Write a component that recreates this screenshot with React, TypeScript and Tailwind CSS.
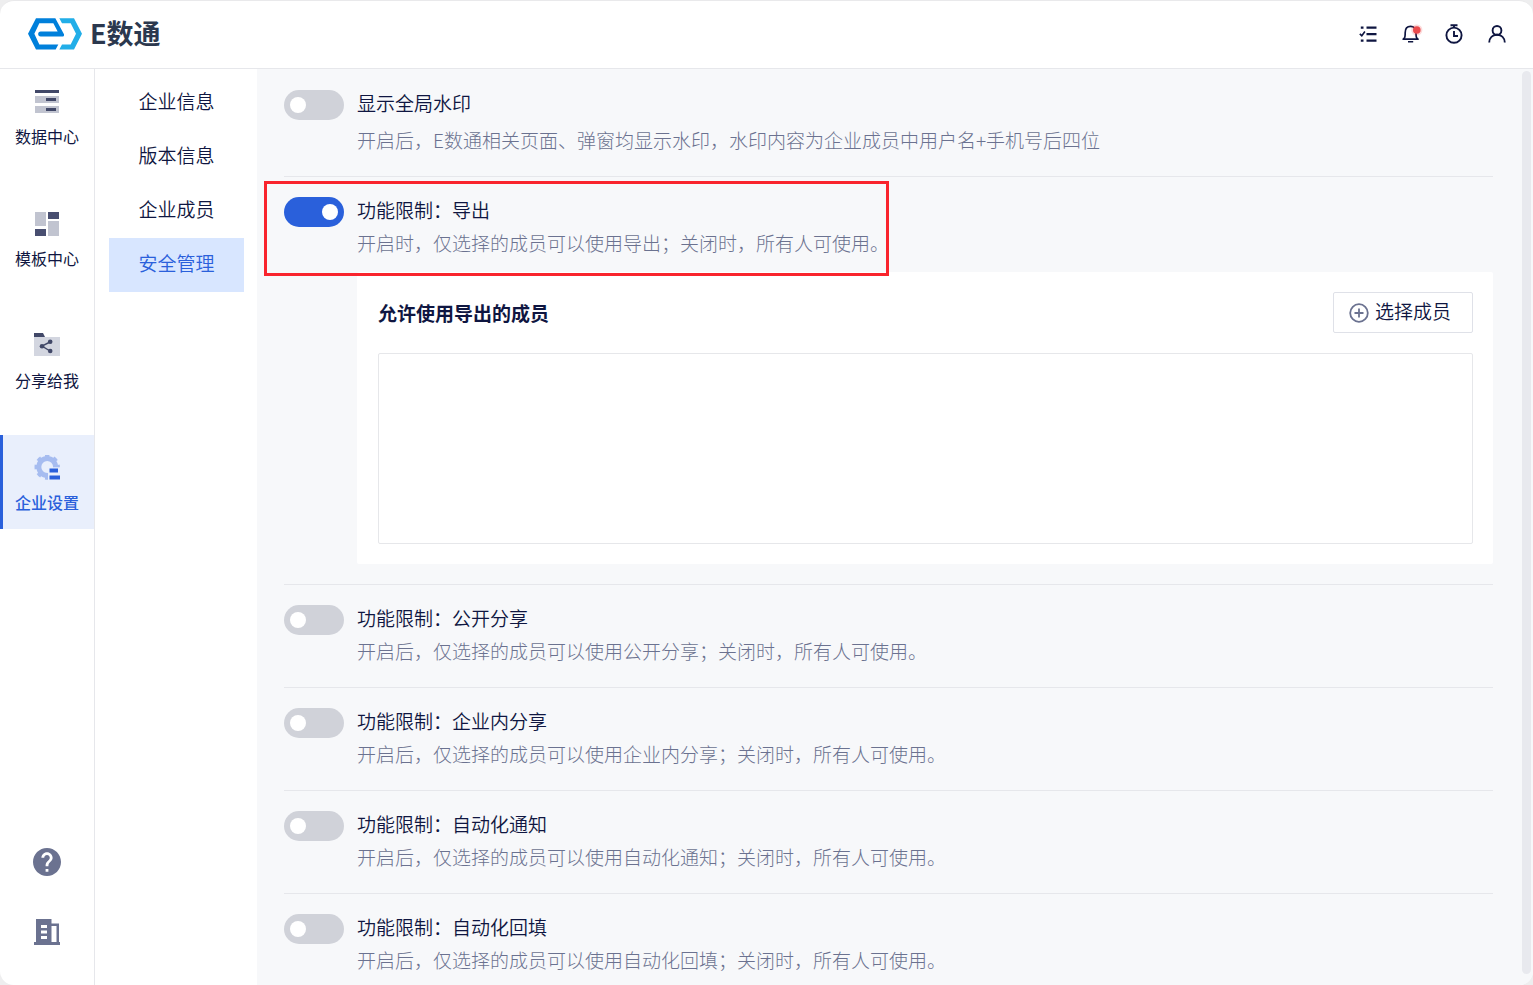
import { useState, type ReactNode } from "react";

type MenuItem = {
  key: string;
  label: string;
  icon: ReactNode;
};

type Setting = {
  id: string;
  title: string;
  description: string;
  memberTitle?: string;
  highlighted?: boolean;
};

function Logo() {
  return (
    <svg viewBox="84 56 162 95" className="h-8 w-[54px]" aria-hidden="true">
      <path
        fill="#0080DB"
        d="M108 56H166L192 104C193 108 191 111 187 111H122C112 111 112 96 122 96H173L160 71H118L103 103L118 135H175L167 150H108L84 103Z"
      />
      <path fill="#22AEE8" d="M178 56H222L246 103L222 150H178L186 135H212L228 103L212 71H186Z" />
    </svg>
  );
}

function DataIcon() {
  return (
    <svg viewBox="0 0 26 26" className="size-[26px]" aria-hidden="true">
      <path fill="#414868" d="M1 1H25V4H1Z" />
      <path fill="#C1C4D0" d="M1 7H25V14H1ZM1 17H25V24H1Z" />
      <path fill="#414868" d="M12 9H22V12H12ZM12 19H22V22H12Z" />
    </svg>
  );
}

function TemplateIcon() {
  return (
    <svg viewBox="0 0 26 26" className="size-[26px]" aria-hidden="true">
      <path fill="#C1C4D0" d="M1 1H12V15H1ZM14 10H25V25H14Z" />
      <path fill="#484E70" d="M14 1H25V8H14ZM1 18H12V25H1Z" />
    </svg>
  );
}

function ShareIcon() {
  return (
    <svg viewBox="0 0 26 26" className="size-[26px]" aria-hidden="true">
      <path fill="#D3D6E0" d="M0 4H26V23H0Z" />
      <path fill="#414868" d="M0 0H9L11 4H0Z" />
      <path stroke="#414868" strokeWidth="1.4" fill="none" d="M16 9L8 13L16 18" />
      <g fill="#414868">
        <circle cx="8" cy="13.3" r="2.3" />
        <circle cx="16.2" cy="8.8" r="2.3" />
        <circle cx="16.2" cy="18" r="2.3" />
      </g>
    </svg>
  );
}

function SettingsIcon() {
  return (
    <svg viewBox="0 0 26 26" className="size-[26px]" aria-hidden="true">
      <g fill="none" stroke="#A6BCF0">
        <circle cx="13.2" cy="12" r="8.4" strokeWidth="5" />
        <circle
          cx="13.2"
          cy="12"
          r="11.2"
          strokeWidth="3"
          pathLength="16"
          strokeDasharray="1 1"
          strokeDashoffset="0.5"
        />
      </g>
      <path fill="#E9EFFC" d="M14 12.3H26V26H14Z" />
      <path fill="#2A60DB" d="M15.5 13.5H24V17.5H15.5ZM15.5 20.5H26V24.5H15.5Z" />
    </svg>
  );
}

function HelpIcon() {
  return (
    <svg viewBox="2 2 20 20" className="size-7" aria-hidden="true">
      <path
        fill="#6B7290"
        d="M12 2C6.48 2 2 6.48 2 12s4.48 10 10 10 10-4.48 10-10S17.52 2 12 2zm1 17h-2v-2h2v2zm2.07-7.75l-.9.92C13.45 12.9 13 13.5 13 15h-2v-.5c0-1.1.45-2.1 1.17-2.83l1.24-1.26c.37-.36.59-.86.59-1.41 0-1.1-.9-2-2-2s-2 .9-2 2H8c0-2.21 1.79-4 4-4s4 1.79 4 4c0 .88-.36 1.68-.93 2.25z"
      />
    </svg>
  );
}

function BuildingIcon() {
  return (
    <svg viewBox="0 0 26 26" className="size-[26px]" aria-hidden="true">
      <path
        fill="#6B7290"
        fillRule="evenodd"
        d="M2 0H17.5V4.5H25V23H26V26H0V23H2ZM17.5 7V23H22.5V7ZM7 6V9H13V6ZM7 11.5V14.5H13V11.5ZM7 17V20H13V17Z"
      />
    </svg>
  );
}

function TaskIcon() {
  return (
    <svg viewBox="0 0 18 18" className="size-[18px]" aria-hidden="true">
      <path fill="#0F1641" d="M7.5 1.5H17.5V3.7H7.5ZM7.5 8H17.5V10.2H7.5ZM7.5 14.5H17.5V16.7H7.5ZM1.8 1.5H4.5V3.7H1.8ZM1.8 14.5H4.5V16.7H1.8Z" />
      <path fill="none" stroke="#0F1641" strokeWidth="1.6" d="M0.8 8.8L2.8 10.7L5.9 6.5" />
    </svg>
  );
}

function BellIcon() {
  return (
    <svg viewBox="0 0 18 18" className="size-[18px] overflow-visible" aria-hidden="true">
      <path
        fill="none"
        stroke="#0F1641"
        strokeWidth="1.7"
        strokeLinejoin="round"
        d="M1.2 14.2H16C14.2 12.8 14 12 14 7.5C14 3.5 11.8 1.3 8.6 1.3C5.4 1.3 3.2 3.5 3.2 7.5C3.2 12 3 12.8 1.2 14.2Z"
      />
      <path fill="#0F1641" d="M6 16H11.2V17.6H6Z" />
      <circle cx="14.8" cy="5" r="5.6" fill="#EF4444" opacity="0.2" />
      <circle cx="14.8" cy="5" r="3.8" fill="#EB4B4D" />
    </svg>
  );
}

function TimerIcon() {
  return (
    <svg viewBox="0 0 18 20" className="h-5 w-[18px]" aria-hidden="true">
      <g fill="none" stroke="#0F1641" strokeWidth="1.9">
        <circle cx="9" cy="11.2" r="7.6" />
        <path d="M5.5 1.2H12.5M9 1.2V3.5M9 7V12H13" />
      </g>
    </svg>
  );
}

function UserIcon() {
  return (
    <svg viewBox="0 0 18 18" className="size-[18px]" aria-hidden="true">
      <g fill="none" stroke="#0F1641" strokeWidth="1.9">
        <circle cx="9" cy="5.4" r="4.4" />
        <path d="M1.2 17.5C1.4 12.8 4.5 9.8 9 9.8C13.5 9.8 16.6 12.8 16.8 17.5" />
      </g>
    </svg>
  );
}

const mainMenu: MenuItem[] = [
  { key: "data", label: "数据中心", icon: <DataIcon /> },
  { key: "template", label: "模板中心", icon: <TemplateIcon /> },
  { key: "share", label: "分享给我", icon: <ShareIcon /> },
  { key: "company", label: "企业设置", icon: <SettingsIcon /> },
];

const tools: MenuItem[] = [
  { key: "task", label: "任务列表", icon: <TaskIcon /> },
  { key: "bell", label: "消息通知", icon: <BellIcon /> },
  { key: "timer", label: "定时任务", icon: <TimerIcon /> },
  { key: "user", label: "个人中心", icon: <UserIcon /> },
];

const subMenu = ["企业信息", "版本信息", "企业成员", "安全管理"];

const settings: Setting[] = [
  {
    id: "watermark",
    title: "显示全局水印",
    description: "开启后，E数通相关页面、弹窗均显示水印，水印内容为企业成员中用户名+手机号后四位",
  },
  {
    id: "export",
    title: "功能限制：导出",
    description: "开启时，仅选择的成员可以使用导出；关闭时，所有人可使用。",
    memberTitle: "允许使用导出的成员",
    highlighted: true,
  },
  {
    id: "public-share",
    title: "功能限制：公开分享",
    description: "开启后，仅选择的成员可以使用公开分享；关闭时，所有人可使用。",
  },
  {
    id: "company-share",
    title: "功能限制：企业内分享",
    description: "开启后，仅选择的成员可以使用企业内分享；关闭时，所有人可使用。",
  },
  {
    id: "auto-notice",
    title: "功能限制：自动化通知",
    description: "开启后，仅选择的成员可以使用自动化通知；关闭时，所有人可使用。",
  },
  {
    id: "auto-fill",
    title: "功能限制：自动化回填",
    description: "开启后，仅选择的成员可以使用自动化回填；关闭时，所有人可使用。",
  },
];

function MemberPanel({ title }: { title: string }) {
  return (
    <div className="mt-[13px] rounded-xs bg-white py-5 pr-5 pl-[21px]">
      <div className="flex items-center justify-between">
        <h2 className="text-[19px] font-bold">{title}</h2>
        <button
          type="button"
          className="flex h-[41px] w-[140px] items-center justify-center gap-1.5 rounded-xs border border-[#dfe1e8] pr-1.5 text-[19px] font-[350]"
        >
          <svg viewBox="0 0 20 20" className="size-5" fill="none" stroke="#6B7290" strokeWidth="1.8" aria-hidden="true">
            <circle cx="10" cy="10" r="8.8" />
            <path d="M10 5.5V14.5M5.5 10H14.5" />
          </svg>
          <span className="pb-1">选择成员</span>
        </button>
      </div>
      <div className="mt-5 h-[191px] rounded-xs border border-[#e6e7ea]" />
    </div>
  );
}

export default function App() {
  const [enabled, setEnabled] = useState<string[]>(["export"]);

  function toggle(id: string) {
    setEnabled((prev) => (prev.includes(id) ? prev.filter((item) => item !== id) : [...prev, id]));
  }

  return (
    <div className="h-screen bg-[#eeeeef] font-['Noto_Sans_CJK_SC',sans-serif] text-[#0f1641]">
      <div className="flex h-full flex-col overflow-hidden rounded-[14px] border-t border-[#e9e9eb] bg-white">
        <header className="flex h-[68px] shrink-0 items-center justify-between border-b border-[#e6e7eb] pr-[27px] pb-0.5 pl-7">
          <a href="#home" className="flex items-center gap-2 text-[27px] leading-8 font-bold text-[#2b384e]">
            <Logo />
            <span className="pb-0.5">E数通</span>
          </a>
          <div className="flex items-center gap-[25px]">
            {tools.map((tool) => (
              <button key={tool.key} type="button" aria-label={tool.label}>
                {tool.icon}
              </button>
            ))}
          </div>
        </header>

        <div className="flex min-h-0 flex-1">
          <aside className="flex w-[95px] shrink-0 flex-col justify-between border-r border-[#e6e7eb]">
            <nav className="flex flex-col gap-7">
              {mainMenu.map((item) => (
                <a
                  key={item.key}
                  href={`#${item.key}`}
                  className={
                    item.key === "company"
                      ? "flex h-[94px] flex-col items-center gap-[7px] border-l-3 border-[#2a60db] bg-[#e9effc] pt-5 pr-[3px] text-base font-medium text-[#2a60db]"
                      : "flex h-[94px] flex-col items-center gap-[7px] pt-5 text-base font-normal"
                  }
                >
                  {item.icon}
                  <span className="leading-7">{item.label}</span>
                </a>
              ))}
            </nav>
            <div className="flex flex-col items-center gap-[43px] pb-10">
              <button type="button" aria-label="帮助">
                <HelpIcon />
              </button>
              <button type="button" aria-label="企业">
                <BuildingIcon />
              </button>
            </div>
          </aside>

          <nav className="flex w-[162px] shrink-0 flex-col pt-[7px] pr-[13px] pl-[14px] text-[19px] leading-[50px] font-[350]">
            {subMenu.map((label) => (
              <a
                key={label}
                href={`#${label}`}
                className={label === "安全管理" ? "bg-[#d8e6ff] pb-1 text-center text-[#2a60db]" : "pb-1 text-center"}
              >
                {label}
              </a>
            ))}
          </nav>

          <main className="flex min-w-0 flex-1 bg-[#f7f8fa]">
            <div className="min-w-0 flex-1 overflow-y-auto pt-px pr-[29px] pl-[27px] [scrollbar-width:none]">
              {settings.map((item) => {
                const checked = enabled.includes(item.id);
                return (
                  <section
                    key={item.id}
                    className="relative flex gap-[13px] border-b border-[#e6e7eb] pt-4 pb-5 last:border-b-0 last:pb-0"
                  >
                    <input
                      id={item.id}
                      type="checkbox"
                      role="switch"
                      checked={checked}
                      onChange={() => toggle(item.id)}
                      className="mt-1 flex h-[30px] w-[60px] shrink-0 cursor-pointer appearance-none items-center rounded-full bg-[#d0d2d9] px-1.5 before:size-4 before:rounded-full before:bg-white checked:justify-end checked:bg-[#2a60db]"
                    />
                    <div className="min-w-0 flex-1 text-[19px] leading-[33px]">
                      <label htmlFor={item.id} className="block font-[350]">
                        {item.title}
                      </label>
                      <p
                        className={
                          item.id === "watermark" ? "mt-1 font-light text-[#6b7290]" : "font-light text-[#6b7290]"
                        }
                      >
                        {item.description}
                      </p>
                      {checked && item.memberTitle && <MemberPanel title={item.memberTitle} />}
                    </div>
                    {item.highlighted && (
                      <div className="pointer-events-none absolute top-1 -left-5 h-[95px] w-[625px] border-3 border-[#f9242d]" />
                    )}
                  </section>
                );
              })}
            </div>
            <div className="w-[11px] shrink-0 pt-0.5 pr-0.5 pb-[11px]">
              <div className="h-full rounded-full bg-[#e8e9ee]" />
            </div>
          </main>
        </div>
      </div>
    </div>
  );
}
